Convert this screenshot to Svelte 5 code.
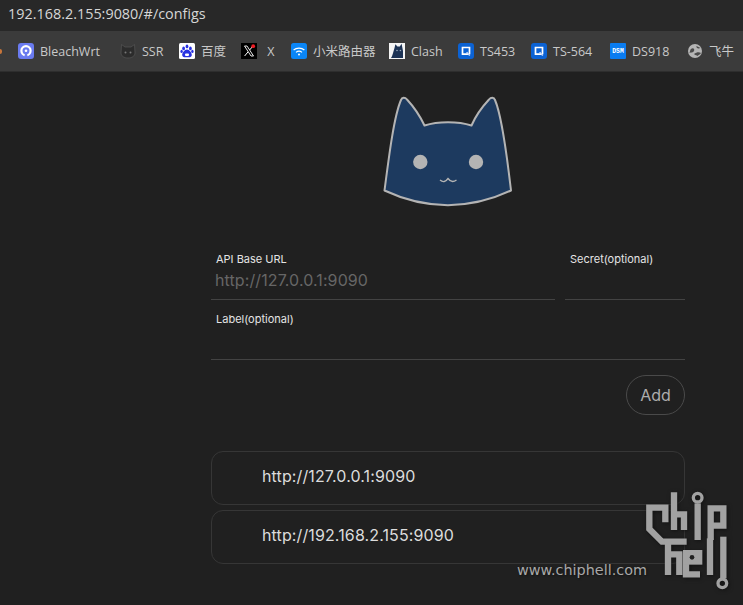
<script>
    // w = width of the label slot, keeps the bar spacing of the real browser
    const bookmarks = [
        { name: 'BleachWrt', icon: 'bleach', w: 63.5 },
        { name: 'SSR', icon: 'ssr', w: 20.5 },
        { name: '百度', icon: 'baidu', w: 23.5 },
        { name: 'X', icon: 'x', w: 11.5 },
        { name: '小米路由器', icon: 'wifi', w: 59.5 },
        { name: 'Clash', icon: 'clash', w: 30.5 },
        { name: 'TS453', icon: 'qnap', w: 34.5 },
        { name: 'TS-564', icon: 'qnap', w: 40.5 },
        { name: 'DS918', icon: 'dsm', w: 38.5 },
        { name: '飞牛', icon: 'globe', w: 24 },
    ];
    const servers = ['http://127.0.0.1:9090', 'http://192.168.2.155:9090'];
</script>

<div class="address">192.168.2.155:9080/#/configs</div>

<div class="bookmarks">
    <span class="cut"></span>
    {#each bookmarks as b}
        <div class="bookmark">
            <svg class="favicon" viewBox="0 0 16 16">
                {#if b.icon === 'bleach'}
                    <rect width="16" height="16" rx="3" fill="#6a7bf0" />
                    <circle cx="8" cy="7.8" r="4.6" fill="none" stroke="#fff" stroke-width="2.2" />
                    <path d="M6.4 14 L7.2 8 H8.8 L9.6 14Z" fill="#6a7bf0" />
                    <circle cx="8" cy="7.8" r="1.3" fill="#fff" />
                {:else if b.icon === 'ssr'}
                    <path d="M1.5 1.5 L5 4 H11 L14.5 1.5 L15 10 C15 13 12 15 8 15 C4 15 1 13 1 10Z" fill="#2c2c2c" stroke="#565656" stroke-width=".7" />
                    <circle cx="5.5" cy="9.5" r="1" fill="#777" />
                    <circle cx="10.5" cy="9.5" r="1" fill="#777" />
                {:else if b.icon === 'baidu'}
                    <rect width="16" height="16" rx="1.5" fill="#fff" />
                    <ellipse cx="4.6" cy="5.4" rx="1.4" ry="1.9" fill="#2932e1" />
                    <ellipse cx="8" cy="3.4" rx="1.4" ry="1.9" fill="#2932e1" />
                    <ellipse cx="11.4" cy="5.4" rx="1.4" ry="1.9" fill="#2932e1" />
                    <ellipse cx="2.6" cy="8.4" rx="1.2" ry="1.6" fill="#2932e1" />
                    <ellipse cx="13.4" cy="8.4" rx="1.2" ry="1.6" fill="#2932e1" />
                    <path d="M8 6.6 C10.5 6.6 12.8 10 12.8 12 C12.8 14 10.8 14.6 8 14.2 C5.2 14.6 3.2 14 3.2 12 C3.2 10 5.5 6.6 8 6.6Z" fill="#2932e1" />
                    <rect x="6" y="10.4" width="4" height="2.6" rx="1" fill="#fff" />
                {:else if b.icon === 'x'}
                    <rect width="16" height="16" fill="#000" />
                    <path d="M3.5 3 H6 L12.5 13 H10Z" fill="none" stroke="#fff" stroke-width=".9" />
                    <path d="M12 3 L8.6 7 M7 8.9 L3.6 13" stroke="#fff" stroke-width="1" />
                    <circle cx="12.2" cy="3.2" r="1.9" fill="#f01c24" />
                {:else if b.icon === 'wifi'}
                    <rect width="16" height="16" rx="2.5" fill="#0a86f7" />
                    <path d="M2.6 7 C5.6 4.4 10.4 4.4 13.4 7" fill="none" stroke="#fff" stroke-width="1.2" />
                    <path d="M5 9.4 C6.8 8 9.2 8 11 9.4" fill="none" stroke="#fff" stroke-width="1.2" />
                    <circle cx="8" cy="11.6" r="1" fill="#fff" />
                {:else if b.icon === 'clash'}
                    <rect width="16" height="16" fill="#f4f4f4" />
                    <path d="M5.5 5 L6.4 1.2 L8.4 3.4 H10.8 L12.6 .8 L14 8 V15 H2 C3.5 13 4.2 9 5.5 5Z" fill="#1c3254" />
                    <circle cx="8" cy="7.5" r=".8" fill="#9ab" />
                    <circle cx="11.4" cy="7.5" r=".8" fill="#9ab" />
                {:else if b.icon === 'qnap'}
                    <rect width="16" height="16" rx="3" fill="#0b62d4" />
                    <path d="M11.5 11.2 V4.5 H4.5 V11.2 H10" fill="none" stroke="#fff" stroke-width="1.7" />
                    <path d="M8.6 9.2 L11.8 12.6" stroke="#cfe0ff" stroke-width="1.4" />
                {:else if b.icon === 'dsm'}
                    <rect width="16" height="16" rx="1" fill="#0a7cf0" />
                    <text x="8" y="10.2" text-anchor="middle" class="dsm">DSM</text>
                {:else}
                    <circle cx="8" cy="8" r="7" fill="#b5b5b5" />
                    <path d="M3.5 6.5 C6 4 8 6 7 8 C6 10 4 9 2.5 10Z M9.5 3 C9 5 11 6 13.5 5Z M7 11 C10 8.5 12.5 9 14 10 C13 11.5 11.5 12 10.5 13 C10 12 8 12.5 7 11Z" fill="#4a4a4a" />
                {/if}
            </svg>
            <span class:end={b.name === 'X'} style="width: {b.w}px">{b.name}</span>
        </div>
    {/each}
</div>

<main class="page">
    <svg class="logo" viewBox="1 1 155 130" aria-label="Clash">
        <path d="M14.5 106.5 C19 72 24 32 31 16 C32 13 35 13 37 15.5 C43 22 50 32 54.5 41.5 C68 37 88 37 101.5 41.5 C106 31 113 22 119 15.5 C121 13 124 13 125 16 C132 32 137 72 141 106.5 C100 126 56 126 14.5 106.5Z" fill="#1d3a5f" stroke="#b4b4b4" stroke-width="2" stroke-linejoin="round" />
        <circle cx="50.3" cy="78" r="7.2" fill="#b4b4b4" />
        <circle cx="106" cy="78" r="7.2" fill="#b4b4b4" />
        <path d="M70 96 C73 98.5 75.5 98 78 94.5 C80.5 98 83 98.5 86.5 96" fill="none" stroke="#b4b4b4" stroke-width="1.3" />
    </svg>

    <form class="form" on:submit|preventDefault>
        <div class="field">
            <label for="url">API Base URL</label>
            <input id="url" type="text" placeholder="http://127.0.0.1:9090" />
        </div>
        <div class="field">
            <label for="secret">Secret(optional)</label>
            <input id="secret" type="text" />
        </div>
        <div class="field wide">
            <label for="label">Label(optional)</label>
            <input id="label" type="text" />
        </div>
    </form>

    <div class="actions">
        <button class="add" type="button">Add</button>
    </div>

    <ul class="servers">
        {#each servers as url}
            <li>{url}</li>
        {/each}
    </ul>
</main>

<!-- forum watermark burned into the screenshot -->
<div class="watermark">
    <span class="site">www.chiphell.com</span>
    <svg class="mark" viewBox="0 0 270 330">
        <g fill="none" stroke="#a2a2a2" stroke-width="19">
            <path d="M76 112 V68 H28 V132 L66 170 H140" />
            <path d="M102 22 V135 M102 88 H132 V135" />
            <path d="M173 55 V165" />
            <path d="M212 165 V70 H250 V122 H212" />
            <path d="M84 170 V270 M84 208 H118 V270" />
            <path d="M138 205 V268 H180" />
            <path d="M210 160 V270" />
            <path d="M250 155 V280" />
        </g>
        <rect x="129" y="195" width="58" height="44" fill="#a2a2a2" />
        <circle cx="156" cy="217" r="7" fill="#202020" />
        <circle cx="173" cy="38" r="13" fill="none" stroke="#a2a2a2" stroke-width="10" />
        <circle cx="247" cy="295" r="13" fill="none" stroke="#a2a2a2" stroke-width="10" />
    </svg>
</div>

<style>
    :global(body) {
        background: #202020;
        overflow: hidden;
    }

    .address {
        height: 31px;
        box-sizing: border-box;
        padding: 4px 0 0 8px;
        background: #282828;
        color: #d6d6d6;
        font: 14.4px/20px "Open Sans", sans-serif;
    }

    .bookmarks {
        display: flex;
        align-items: center;
        gap: 16.5px;
        height: 40px;
        background: #3b3b3b;
        border-bottom: 1px solid #2e2e2e;
        overflow: hidden;
        white-space: nowrap;
    }

    .cut {
        flex: none;
        width: 2px;
        height: 5px;
        margin-right: -0.5px;
        background: #c8753a;
        border-radius: 0 3px 3px 0;
    }

    .bookmark {
        flex: none;
        display: flex;
        align-items: center;
        gap: 6px;
        color: #c9c9c9;
        font: 12.5px/16px "Open Sans", "Noto Sans CJK SC", sans-serif;
    }

    .bookmark span {
        padding-top: 1px;
    }

    .bookmark .end {
        text-align: right;
    }

    .favicon {
        width: 16px;
        height: 16px;
        flex: none;
    }

    .dsm {
        fill: #fff;
        font: 700 6.4px "Liberation Mono", monospace;
    }

    .page {
        box-sizing: border-box;
        width: 474px;
        margin-left: 211px;
        padding-top: 13px;
        font-family: Inter, sans-serif;
    }

    .logo {
        display: block;
        width: 155px;
        height: 130px;
        margin: 0 auto 25px;
    }

    .form {
        display: grid;
        grid-template-columns: 344px 120px;
        column-gap: 10px;
    }

    .field {
        display: flex;
        flex-direction: column;
        height: 60px;
        box-sizing: border-box;
        padding: 12px 0 0 5px;
        border-bottom: 1px solid #434343;
    }

    .wide {
        grid-column: 1 / -1;
    }

    label {
        color: #e4e4e4;
        font-size: 11px;
        line-height: 14px;
    }

    input {
        min-width: 0;
        margin: 0 0 0 -1px;
        padding: 0;
        height: 28px;
        border: 0;
        outline: 0;
        background: transparent;
        color: #ddd;
        font: 16px Inter, sans-serif;
        letter-spacing: 0.1px;
    }

    input::placeholder {
        color: #666;
        opacity: 1;
    }

    .actions {
        display: flex;
        justify-content: flex-end;
        padding-top: 15px;
    }

    .add {
        width: 59px;
        height: 40px;
        padding: 0;
        border: 1px solid #4a4a4a;
        border-radius: 20px;
        background: transparent;
        color: #adadad;
        font: 16px Inter, sans-serif;
    }

    .servers {
        display: flex;
        flex-direction: column;
        gap: 5px;
        margin: 36px 0 0;
        padding: 0;
        list-style: none;
    }

    .servers li {
        box-sizing: border-box;
        height: 54px;
        padding-left: 50px;
        border: 1px solid #363636;
        border-radius: 12px;
        color: #dcdcdc;
        font-size: 16px;
        letter-spacing: 0.12px;
        line-height: 48px;
    }

    .watermark {
        position: absolute;
        left: 517px;
        top: 485px;
        width: 213px;
        height: 110px;
    }

    .site {
        position: absolute;
        left: 0;
        top: 75px;
        color: #a8a8a8;
        font: 14.4px/20px "DejaVu Sans", sans-serif;
        text-shadow: 1px 1px 2px #111;
    }

    .mark {
        position: absolute;
        left: 123px;
        top: 0;
        width: 90px;
        height: 110px;
        filter: drop-shadow(1px 1px 2px #111);
    }
</style>
